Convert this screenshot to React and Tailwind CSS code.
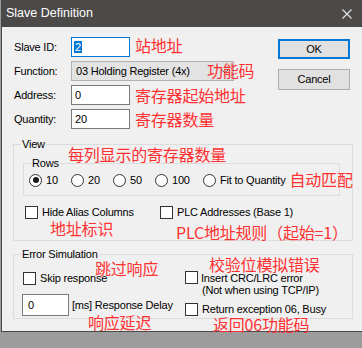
import React from "react";

const note =
  "font-['Noto_Sans_CJK_SC','Noto_Sans_CJK_TC',sans-serif] text-[16px] leading-4 text-[#ff3030] whitespace-nowrap";

function CheckBox({ label, className = "" }) {
  return (
    <div className={`flex items-center gap-[4px] h-[13px] ${className}`}>
      <span className="w-[13px] h-[13px] shrink-0 border border-[#333] bg-white" />
      <span className="whitespace-nowrap">{label}</span>
    </div>
  );
}

function Radio({ label, checked, className = "" }) {
  return (
    <div className={`flex items-center gap-[4px] shrink-0 ${className}`}>
      <span className="w-[13px] h-[13px] shrink-0 rounded-full border border-[#333] bg-white flex items-center justify-center">
        {checked && <span className="w-[6px] h-[6px] rounded-full bg-[#1a1a1a]" />}
      </span>
      <span className="whitespace-nowrap">{label}</span>
    </div>
  );
}

function GroupBox({ title, className = "", children }) {
  return (
    <div className={`relative border border-[#dcdcdc] ${className}`}>
      <span className="absolute left-[7px] -top-[7px] px-px leading-[13px] bg-[#f0f0f0]">{title}</span>
      {children}
    </div>
  );
}

function FieldRow({ label, children }) {
  return (
    <div className="flex items-center h-[20px]">
      <span className="w-[57px] shrink-0">{label}</span>
      {children}
    </div>
  );
}

export default function App() {
  return (
    <div className="relative w-[362px] h-[348px] overflow-hidden bg-[#9c9c9c] font-['Liberation_Sans',Arial,sans-serif] text-[11px] tracking-[-0.2px] text-black">
      <div className="ml-px h-[332px] flex flex-col border-l border-b border-[#4a4a4a] bg-[#f0f0f0]">
        {/* title bar */}
        <div className="h-[27px] shrink-0 flex items-center pl-[4px] pr-[10px] bg-[#4c4a48] text-white text-[12.5px] tracking-normal">
          <span>Slave Definition</span>
          <svg className="ml-auto" width="10" height="10" viewBox="0 0 10 10">
            <path d="M0.5 0.5 L9.5 9.5 M9.5 0.5 L0.5 9.5" stroke="#e6e6e6" strokeWidth="1.1" />
          </svg>
        </div>

        {/* top fields + buttons */}
        <div className="flex">
          <div className="pl-[12px] pt-[10px] flex flex-col gap-[4px]">
            <FieldRow label="Slave ID:">
              <div className="w-[59px] h-[20px] border border-[#0078d7] bg-white flex items-center pl-[2px]">
                <span className="bg-[#0078d7] text-white leading-[12px] px-px">2</span>
              </div>
              <span className={`${note} ml-[5px] -mt-[4px]`}>站地址</span>
            </FieldRow>
            <FieldRow label="Function:">
              <div className="w-[163px] h-[20px] border border-[#b0b0b0] bg-[#e3e3e3] flex items-center pl-[4px] pr-[4px]">
                <span className="whitespace-nowrap">03 Holding Register (4x)</span>
                <svg className="ml-auto" width="8" height="5" viewBox="0 0 8 5">
                  <path d="M0.5 0.5 L4 4 L7.5 0.5" fill="none" stroke="#606060" />
                </svg>
              </div>
            </FieldRow>
            <FieldRow label="Address:">
              <div className="w-[59px] h-[20px] border border-[#7a7a7a] bg-white flex items-center pl-[3px]">0</div>
              <span className={`${note} ml-[5px]`}>寄存器起始地址</span>
            </FieldRow>
            <FieldRow label="Quantity:">
              <div className="w-[59px] h-[20px] border border-[#7a7a7a] bg-white flex items-center pl-[3px]">20</div>
              <span className={`${note} ml-[5px]`}>寄存器数量</span>
            </FieldRow>
          </div>
          <div className="ml-auto mr-[12px] mt-[12px] flex flex-col gap-[10px]">
            <button className="w-[72px] h-[20px] border-2 border-[#0078d7] bg-[#e1e1e1] flex items-center justify-center">OK</button>
            <button className="w-[72px] h-[21px] border border-[#adadad] bg-[#e1e1e1] flex items-center justify-center">Cancel</button>
          </div>
        </div>

        {/* View */}
        <GroupBox title="View" className="mt-[15px] ml-[11px] w-[340px] h-[97px] shrink-0">
          <GroupBox title="Rows" className="mt-[18px] ml-[9px] w-[317px] h-[33px]">
            <div className="h-full flex items-center pl-[5px] pt-px">
              <Radio label="10" checked className="w-[42px]" />
              <Radio label="20" className="w-[42px]" />
              <Radio label="50" className="w-[42px]" />
              <Radio label="100" className="w-[48px]" />
              <Radio label="Fit to Quantity" />
              <span className={`${note} ml-[4px] -mt-[3px]`}>自动匹配</span>
            </div>
          </GroupBox>
          <div className="mt-[10px] pl-[11px] flex">
            <CheckBox label="Hide Alias Columns" className="w-[135px]" />
            <CheckBox label="PLC Addresses (Base 1)" />
          </div>
        </GroupBox>

        {/* Error Simulation */}
        <GroupBox title="Error Simulation" className="mt-[13px] ml-[11px] w-[340px] h-[65px] shrink-0 flex">
          <div className="w-[171px] shrink-0 pl-[9px] pt-[17px]">
            <CheckBox label="Skip response" />
            <div className="mt-[9px] -ml-px flex items-center">
              <div className="w-[47px] h-[22px] border border-[#7a7a7a] bg-white flex items-center pl-[5px]">0</div>
              <span className="ml-[3px] whitespace-nowrap">[ms] Response Delay</span>
            </div>
          </div>
          <div className="pt-[16px]">
            <div className="flex items-start gap-[3px]">
              <span className="w-[13px] h-[13px] shrink-0 border border-[#333] bg-white" />
              <div className="mt-px leading-[12px] whitespace-nowrap">
                <div>Insert CRC/LRC error</div>
                <div className="pl-px">(Not when using TCP/IP)</div>
              </div>
            </div>
            <CheckBox label="Return exception 06, Busy" className="mt-[7px] gap-[3px]" />
          </div>
        </GroupBox>
      </div>

      {/* red annotations drawn over the dialog */}
      <span className={`${note} absolute left-[207px] top-[62px]`}>功能码</span>
      <span className={`${note} absolute left-[68px] top-[146px]`}>每列显示的寄存器数量</span>
      <span className={`${note} absolute left-[50px] top-[220px]`}>地址标识</span>
      <span className={`${note} absolute left-[176px] top-[224px]`}>PLC地址规则（起始=1）</span>
      <span className={`${note} absolute left-[95px] top-[260px]`}>跳过响应</span>
      <span className={`${note} absolute left-[209px] top-[256px]`}>校验位模拟错误</span>
      <span className={`${note} absolute left-[88px] top-[314px]`}>响应延迟</span>
      <span className={`${note} absolute left-[213px] top-[316px]`}>返回06功能码</span>
    </div>
  );
}
